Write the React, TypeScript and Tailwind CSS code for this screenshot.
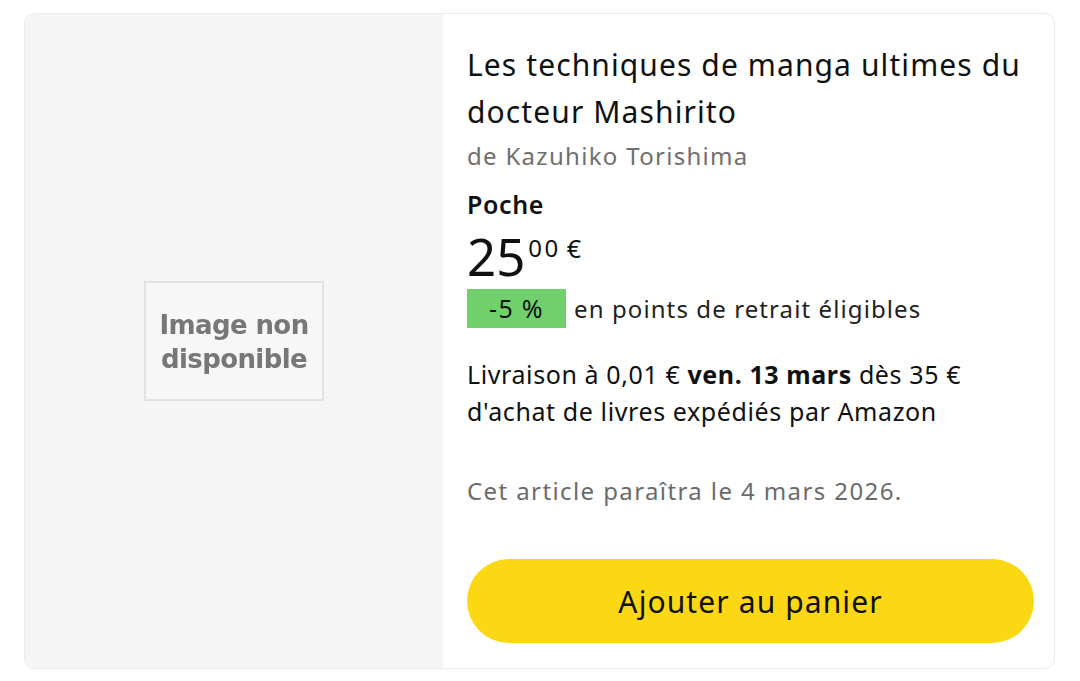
export default function App() {
  return (
    <div
      className="min-h-screen w-full bg-white pl-[24px] pr-[25px] pt-[13px]"
      style={{ fontFamily: '"Noto Sans", "Open Sans", sans-serif' }}
    >
      <div className="flex h-[656px] overflow-hidden rounded-[10px] border border-[#ebebeb] bg-white">
        {/* image column */}
        <div className="flex w-[418px] shrink-0 items-center justify-center bg-[#f5f5f5]">
          <div
            className="flex h-[120px] w-[180px] flex-col items-center justify-center border-2 border-[#e3e3e3] bg-[#f7f7f7] pt-[2px] text-[26px] font-bold leading-[34px] text-[#777777] blur-[0.6px]"
            style={{ fontFamily: '"DejaVu Sans", sans-serif' }}
          >
            <span className="tracking-[-0.6px]">Image non</span>
            <span className="tracking-[-0.6px]">disponible</span>
          </div>
        </div>

        {/* details column */}
        <div className="flex flex-1 flex-col pl-[24px] pr-[20px] pt-[27px] text-[#0f1111]">
          <h1 className="text-[30px] font-normal leading-[47px] tracking-[1.1px]">
            Les techniques de manga ultimes du docteur Mashirito
          </h1>
          <p className="mt-[2px] text-[24px] leading-[38px] tracking-[1.3px] text-[#6f6f6f]">
            de Kazuhiko Torishima
          </p>

          <p className="mt-[12px] text-[25px] font-semibold leading-[34px] tracking-[0.6px]">Poche</p>
          <div className="mt-[6px] flex items-start leading-none">
            <span className="text-[51px] leading-[58px]">25</span>
            <span className="ml-[3px] mt-[9px] text-[24px] leading-none tracking-[2.5px]">00</span>
            <span className="ml-[6px] mt-[9px] text-[25px] leading-none">€</span>
          </div>

          <div className="mt-[4px] flex items-center">
            <span className="flex h-[39px] w-[99px] items-center justify-center bg-[#6fd06c] text-[25px] tracking-[1.3px]">
              -5 %
            </span>
            <span className="ml-[8px] text-[24px] tracking-[1.1px] text-[#222]">
              en points de retrait éligibles
            </span>
          </div>

          <p className="mt-[28px] text-[25px] leading-[37px] tracking-[0.6px]">
            Livraison à 0,01 € <span className="font-bold">ven. 13 mars</span> dès 35 €
            <br />
            d'achat de livres expédiés par Amazon
          </p>

          <p className="mt-[44px] text-[24px] leading-[34px] tracking-[1.4px] text-[#6b6b6b]">
            Cet article paraîtra le 4 mars 2026.
          </p>

          <button
            type="button"
            className="mt-[51px] h-[84px] w-full rounded-full bg-[#fcd714] text-[30px] tracking-[1.1px] text-[#0f1111]"
          >
            Ajouter au panier
          </button>
        </div>
      </div>
    </div>
  )
}
